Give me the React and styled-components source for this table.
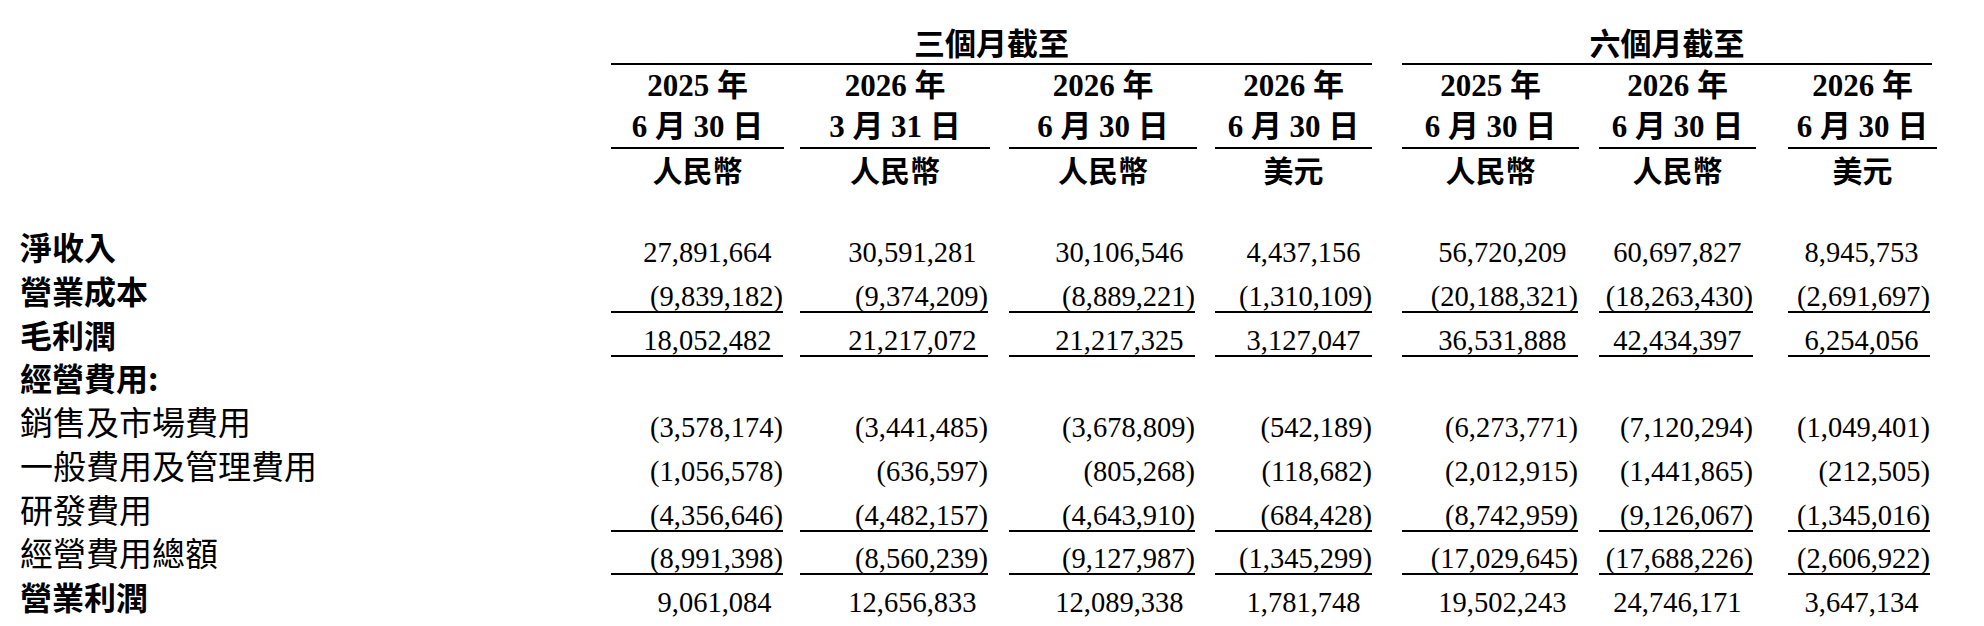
import React from "react";
import styled, { createGlobalStyle } from "styled-components";

const GlobalStyle = createGlobalStyle`
  html, body {
    margin: 0;
    padding: 0;
    background: #ffffff;
    color: #000000;
  }
  body {
    font-family: "Liberation Serif", "Noto Sans CJK TC", serif;
    overflow: hidden;
  }
`;

const LABEL_WIDTH = 611;

const columns = [
  { gap: 0, w: 173, pr: 1, year: "2025 年", date: "6 月 30 日", unit: "人民幣" },
  { gap: 16, w: 190, pr: 2, year: "2026 年", date: "3 月 31 日", unit: "人民幣" },
  { gap: 19, w: 188, pr: 2, year: "2026 年", date: "6 月 30 日", unit: "人民幣" },
  { gap: 18, w: 157, pr: 0, year: "2026 年", date: "6 月 30 日", unit: "美元" },
  { gap: 30, w: 177, pr: 1, year: "2025 年", date: "6 月 30 日", unit: "人民幣" },
  { gap: 20, w: 157, pr: 3, year: "2026 年", date: "6 月 30 日", unit: "人民幣" },
  { gap: 32, w: 149, pr: 7, year: "2026 年", date: "6 月 30 日", unit: "美元" },
];

const template = `${LABEL_WIDTH}px ${columns.map((c) => `${c.gap + c.w}px`).join(" ")}`;

const rows = [
  {
    label: "淨收入",
    bold: true,
    values: ["27,891,664", "30,591,281", "30,106,546", "4,437,156", "56,720,209", "60,697,827", "8,945,753"],
  },
  {
    label: "營業成本",
    bold: true,
    rule: true,
    values: ["(9,839,182)", "(9,374,209)", "(8,889,221)", "(1,310,109)", "(20,188,321)", "(18,263,430)", "(2,691,697)"],
  },
  {
    label: "毛利潤",
    bold: true,
    rule: true,
    values: ["18,052,482", "21,217,072", "21,217,325", "3,127,047", "36,531,888", "42,434,397", "6,254,056"],
  },
  { label: "經營費用:", bold: true, values: null },
  {
    label: "銷售及市場費用",
    values: ["(3,578,174)", "(3,441,485)", "(3,678,809)", "(542,189)", "(6,273,771)", "(7,120,294)", "(1,049,401)"],
  },
  {
    label: "一般費用及管理費用",
    values: ["(1,056,578)", "(636,597)", "(805,268)", "(118,682)", "(2,012,915)", "(1,441,865)", "(212,505)"],
  },
  {
    label: "研發費用",
    rule: true,
    values: ["(4,356,646)", "(4,482,157)", "(4,643,910)", "(684,428)", "(8,742,959)", "(9,126,067)", "(1,345,016)"],
  },
  {
    label: "經營費用總額",
    rule: true,
    values: ["(8,991,398)", "(8,560,239)", "(9,127,987)", "(1,345,299)", "(17,029,645)", "(17,688,226)", "(2,606,922)"],
  },
  {
    label: "營業利潤",
    bold: true,
    values: ["9,061,084", "12,656,833", "12,089,338", "1,781,748", "19,502,243", "24,746,171", "3,647,134"],
  },
];

const Page = styled.div`
  padding-top: 21px;
  width: 1984px;
`;

const HeaderGrid = styled.div`
  display: grid;
  grid-template-columns: ${template};
`;

const GroupCell = styled.div`
  grid-column: ${(p) => p.$col} / span ${(p) => p.$span};
  grid-row: 1;
  padding-left: ${(p) => p.$left}px;
  padding-right: ${(p) => p.$right}px;
`;

const GroupTitle = styled.div`
  font-family: "Noto Sans CJK TC", sans-serif;
  font-weight: 700;
  font-size: 31px;
  line-height: 42px;
  text-align: center;
  border-bottom: 2px solid #000;
`;

const ColHeadCell = styled.div`
  grid-row: 2;
  padding-left: ${(p) => p.$gap}px;
  display: flex;
  flex-direction: column;
`;

const DateBlock = styled.div`
  font-family: "Liberation Serif", "Noto Sans CJK TC", serif;
  font-weight: 700;
  font-size: 31px;
  line-height: 41px;
  text-align: center;
  border-bottom: 2px solid #000;
  white-space: nowrap;
`;

const DateLine = styled.div``;

const UnitLine = styled.div`
  font-family: "Noto Sans CJK TC", sans-serif;
  font-weight: 700;
  font-size: 30px;
  line-height: 41px;
  text-align: center;
`;

const BodyGrid = styled.div`
  display: grid;
  grid-template-columns: ${template};
  grid-auto-rows: 43.75px;
  margin-top: 35px;
`;

const Label = styled.div`
  grid-column: 1;
  padding-left: 20px;
  font-family: "Noto Sans CJK TC", sans-serif;
  font-size: ${(p) => (p.$bold ? 32 : 33)}px;
  font-weight: ${(p) => (p.$bold ? 700 : 400)};
  line-height: 43.75px;
  white-space: nowrap;
`;

const ValueCell = styled.div`
  padding-left: ${(p) => p.$gap}px;
  padding-right: ${(p) => p.$pr}px;
  padding-top: 14px;
`;

const Amount = styled.div`
  font-family: "Liberation Serif", serif;
  font-size: 28.5px;
  line-height: 28px;
  text-align: right;
  white-space: nowrap;
  border-bottom: 2px solid ${(p) => (p.$rule ? "#000" : "transparent")};
`;

const Figure = styled.span`
  padding-right: ${(p) => (p.$neg ? "0" : "0.4em")};
`;

export default function App() {
  return (
    <>
      <GlobalStyle />
      <Page>
        <HeaderGrid>
          <GroupCell $col={2} $span={4} $left={0} $right={0}>
            <GroupTitle>三個月截至</GroupTitle>
          </GroupCell>
          <GroupCell $col={6} $span={3} $left={30} $right={5}>
            <GroupTitle>六個月截至</GroupTitle>
          </GroupCell>
          {columns.map((c, i) => (
            <ColHeadCell key={i} $gap={c.gap} style={{ gridColumn: i + 2 }}>
              <DateBlock>
                <DateLine>{c.year}</DateLine>
                <DateLine>{c.date}</DateLine>
              </DateBlock>
              <UnitLine>{c.unit}</UnitLine>
            </ColHeadCell>
          ))}
        </HeaderGrid>
        <BodyGrid>
          {rows.map((r, ri) => (
            <React.Fragment key={ri}>
              <Label $bold={r.bold} style={{ gridRow: ri + 1 }}>
                {r.label}
              </Label>
              {r.values &&
                r.values.map((v, ci) => (
                  <ValueCell
                    key={ci}
                    $gap={columns[ci].gap}
                    $pr={columns[ci].pr}
                    style={{ gridRow: ri + 1, gridColumn: ci + 2 }}
                  >
                    <Amount $rule={r.rule}>
                      <Figure $neg={v.startsWith("(")}>{v}</Figure>
                    </Amount>
                  </ValueCell>
                ))}
            </React.Fragment>
          ))}
        </BodyGrid>
      </Page>
    </>
  );
}
